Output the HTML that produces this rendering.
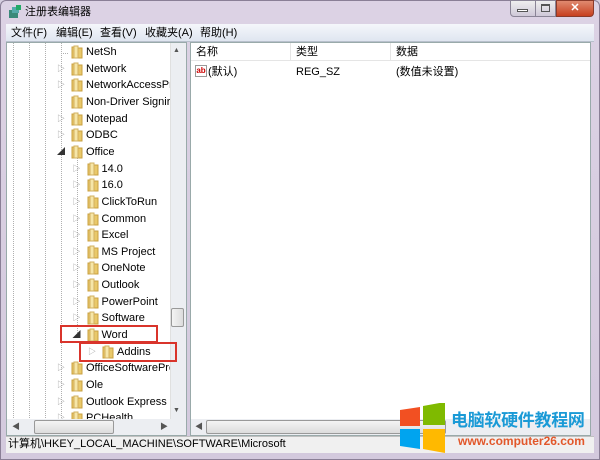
<!DOCTYPE html><html><head><meta charset="utf-8"><style>
*{margin:0;padding:0;box-sizing:border-box}
body{width:600px;height:460px;overflow:hidden;background:#d6cfe0;font-family:"Liberation Sans","Noto Sans CJK SC",sans-serif;font-size:11px;color:#000;position:relative}
.a{position:absolute}
.t{position:absolute;white-space:nowrap;line-height:14px}
</style></head><body>
<div class="a" style="left:0;top:0;width:600px;height:460px;background:linear-gradient(#dcd2e4,#d3c9dd);border:1px solid #8a7f96;border-radius:6px 6px 0 0"></div>
<div class="t" style="left:8px;top:5px">
<svg width="14" height="14" viewBox="0 0 14 14" style="vertical-align:-3px"><rect x="1" y="5" width="9" height="8" fill="#3a8a7a"/><rect x="4" y="2" width="7" height="6" fill="#5aa"/><rect x="8" y="0" width="5" height="5" fill="#2a6"/></svg></div>
<div class="t" style="left:25px;top:5px;font-size:11px">注册表编辑器</div>
<div class="a" style="left:510px;top:0;width:26px;height:17px;background:linear-gradient(#eee,#cfc8d8);border:1px solid #8a8496;border-radius:0 0 0 4px"></div>
<div class="a" style="left:517px;top:9px;width:11px;height:3px;border:1px solid #555;background:#fff"></div>
<div class="a" style="left:536px;top:0;width:20px;height:17px;background:linear-gradient(#eee,#cfc8d8);border:1px solid #8a8496;border-left:none"></div>
<div class="a" style="left:541px;top:4px;width:9px;height:8px;border:1px solid #555;border-top-width:2px"></div>
<div class="a" style="left:556px;top:0;width:38px;height:17px;background:linear-gradient(#e08a70,#c7401f);border:1px solid #8a3a2a;border-radius:0 0 4px 0;color:#fff;font-weight:bold;text-align:center;font-size:11px;line-height:15px">✕</div>
<div class="a" style="left:6px;top:24px;width:588px;height:18px;background:linear-gradient(#f5f7fb,#dfe6f0);border-bottom:1px solid #b8c0cc"></div>
<div class="t" style="left:11px;top:26px">文件(F)</div>
<div class="t" style="left:56px;top:26px">编辑(E)</div>
<div class="t" style="left:100px;top:26px">查看(V)</div>
<div class="t" style="left:145px;top:26px">收藏夹(A)</div>
<div class="t" style="left:200px;top:26px">帮助(H)</div>
<div class="a" style="left:6px;top:42px;width:181px;height:394px;background:#fff;border:1px solid #9aa;overflow:hidden">
<svg class="a" style="left:0;top:0" width="181" height="394">
<g stroke="#b0b0b0" stroke-dasharray="1 1">
<line x1="6.5" y1="0" x2="6.5" y2="394"/><line x1="22.5" y1="0" x2="22.5" y2="394"/><line x1="38.5" y1="0" x2="38.5" y2="394"/>
<line x1="54.5" y1="0" x2="54.5" y2="379"/>
<line x1="70.5" y1="115" x2="70.5" y2="292"/>
<line x1="54" y1="10.5" x2="62" y2="10.5"/>
</g></svg>
</div>
<div id="items" class="a" style="left:0;top:0;width:170px;height:419px;overflow:hidden"></div>
<div class="a" style="left:170px;top:43px;width:16px;height:376px;background:#eceef2;border-left:1px solid #e0e0e0"></div>
<div class="t" style="left:173px;top:44px;font-size:7px;color:#555">▲</div>
<div class="t" style="left:173px;top:404px;font-size:7px;color:#555">▼</div>
<div class="a" style="left:171px;top:308px;width:13px;height:19px;background:linear-gradient(90deg,#f4f4f4,#dcdcdc);border:1px solid #999;border-radius:2px"></div>
<div class="a" style="left:7px;top:419px;width:179px;height:16px;background:#eceef2"></div>
<div class="a" style="left:34px;top:420px;width:80px;height:14px;background:linear-gradient(#f4f4f4,#dcdcdc);border:1px solid #999;border-radius:2px"></div>
<div class="t" style="left:12px;top:420px;font-size:8px;color:#555">◀</div>
<div class="t" style="left:160px;top:420px;font-size:8px;color:#555">▶</div>
<div class="a" style="left:190px;top:42px;width:401px;height:394px;background:#fff;border:1px solid #9aa"></div>
<div class="a" style="left:191px;top:43px;width:399px;height:18px;background:#fff;border-bottom:1px solid #e5e5e5"></div>
<div class="a" style="left:290px;top:43px;width:1px;height:18px;background:#e5e5e5"></div>
<div class="a" style="left:390px;top:43px;width:1px;height:18px;background:#e5e5e5"></div>
<div class="t" style="left:196px;top:45px">名称</div>
<div class="t" style="left:296px;top:45px">类型</div>
<div class="t" style="left:396px;top:45px">数据</div>
<div class="a" style="left:195px;top:65px;width:12px;height:12px;border:1px solid #999;background:#fff;font-size:8px;color:#c00;font-weight:bold;line-height:9px;text-align:center">ab</div>
<div class="t" style="left:208px;top:65px">(默认)</div>
<div class="t" style="left:296px;top:65px">REG_SZ</div>
<div class="t" style="left:396px;top:65px">(数值未设置)</div>
<div class="a" style="left:191px;top:419px;width:399px;height:16px;background:#eceef2"></div>
<div class="a" style="left:206px;top:420px;width:240px;height:14px;background:linear-gradient(#f4f4f4,#dcdcdc);border:1px solid #999;border-radius:2px"></div>
<div class="t" style="left:195px;top:420px;font-size:8px;color:#555">◀</div>
<div class="a" style="left:6px;top:436px;width:588px;height:17px;background:#f0f0f0;border-top:1px solid #c0c0c0"></div>
<div class="t" style="left:8px;top:437px">计算机\HKEY_LOCAL_MACHINE\SOFTWARE\Microsoft</div>
<script>
var it=[["NetSh",0,0],["Network",0,1],["NetworkAccessPr",0,1],["Non-Driver Signir",0,0],["Notepad",0,1],["ODBC",0,1],["Office",0,2],["14.0",1,1],["16.0",1,1],["ClickToRun",1,1],["Common",1,1],["Excel",1,1],["MS Project",1,1],["OneNote",1,1],["Outlook",1,1],["PowerPoint",1,1],["Software",1,1],["Word",1,2],["Addins",2,1],["OfficeSoftwarePro",0,1],["Ole",0,1],["Outlook Express",0,1],["PCHealth",0,1]];
var h="";
for(var i=0;i<it.length;i++){var y=Math.round(45+i*16.65),x=70+it[i][1]*15.5;
if(it[i][2]==1)h+='<div class="t" style="left:'+(x-13)+'px;top:'+y+'px;font-size:8px;color:#999">▷</div>';
if(it[i][2]==2)h+='<div class="t" style="left:'+(x-13)+'px;top:'+y+'px;font-size:8px;color:#333">◢</div>';
h+='<svg class="a" style="left:'+x+'px;top:'+(y-1)+'px" width="14" height="15"><path d="M2 3h4l1 1h5v10H2z" fill="#e9c96a" stroke="#c9a040"/><rect x="4" y="2" width="4" height="12" fill="#f6e6a8" stroke="#d2b060"/></svg>';
h+='<div class="t" style="left:'+(x+16)+'px;top:'+y+'px">'+it[i][0]+'</div>';}
document.getElementById("items").innerHTML=h;
</script>
<div class="a" style="left:60px;top:325px;width:98px;height:18px;border:2px solid #d9342b"></div>
<div class="a" style="left:79px;top:342px;width:98px;height:20px;border:2px solid #d9342b"></div>
<svg class="a" style="left:400px;top:403px" width="48" height="50"><path d="M0 7l20-3v19H0z" fill="#f25022"/><path d="M23 3l22-4v23H23z" fill="#7fba00"/><path d="M0 26h20v20L0 43z" fill="#00a4ef"/><path d="M23 26h22v24l-22-4z" fill="#ffb900"/></svg>
<div class="t" style="left:451px;top:408px;font-size:17px;line-height:22px;font-weight:bold;color:#1a9ad6;letter-spacing:-0.3px;font-family:'Noto Sans CJK SC',sans-serif">电脑软硬件教程网</div>
<div class="t" style="left:458px;top:434px;font-size:12px;font-weight:bold;color:#e2572a">www.computer26.com</div>
</body></html>
